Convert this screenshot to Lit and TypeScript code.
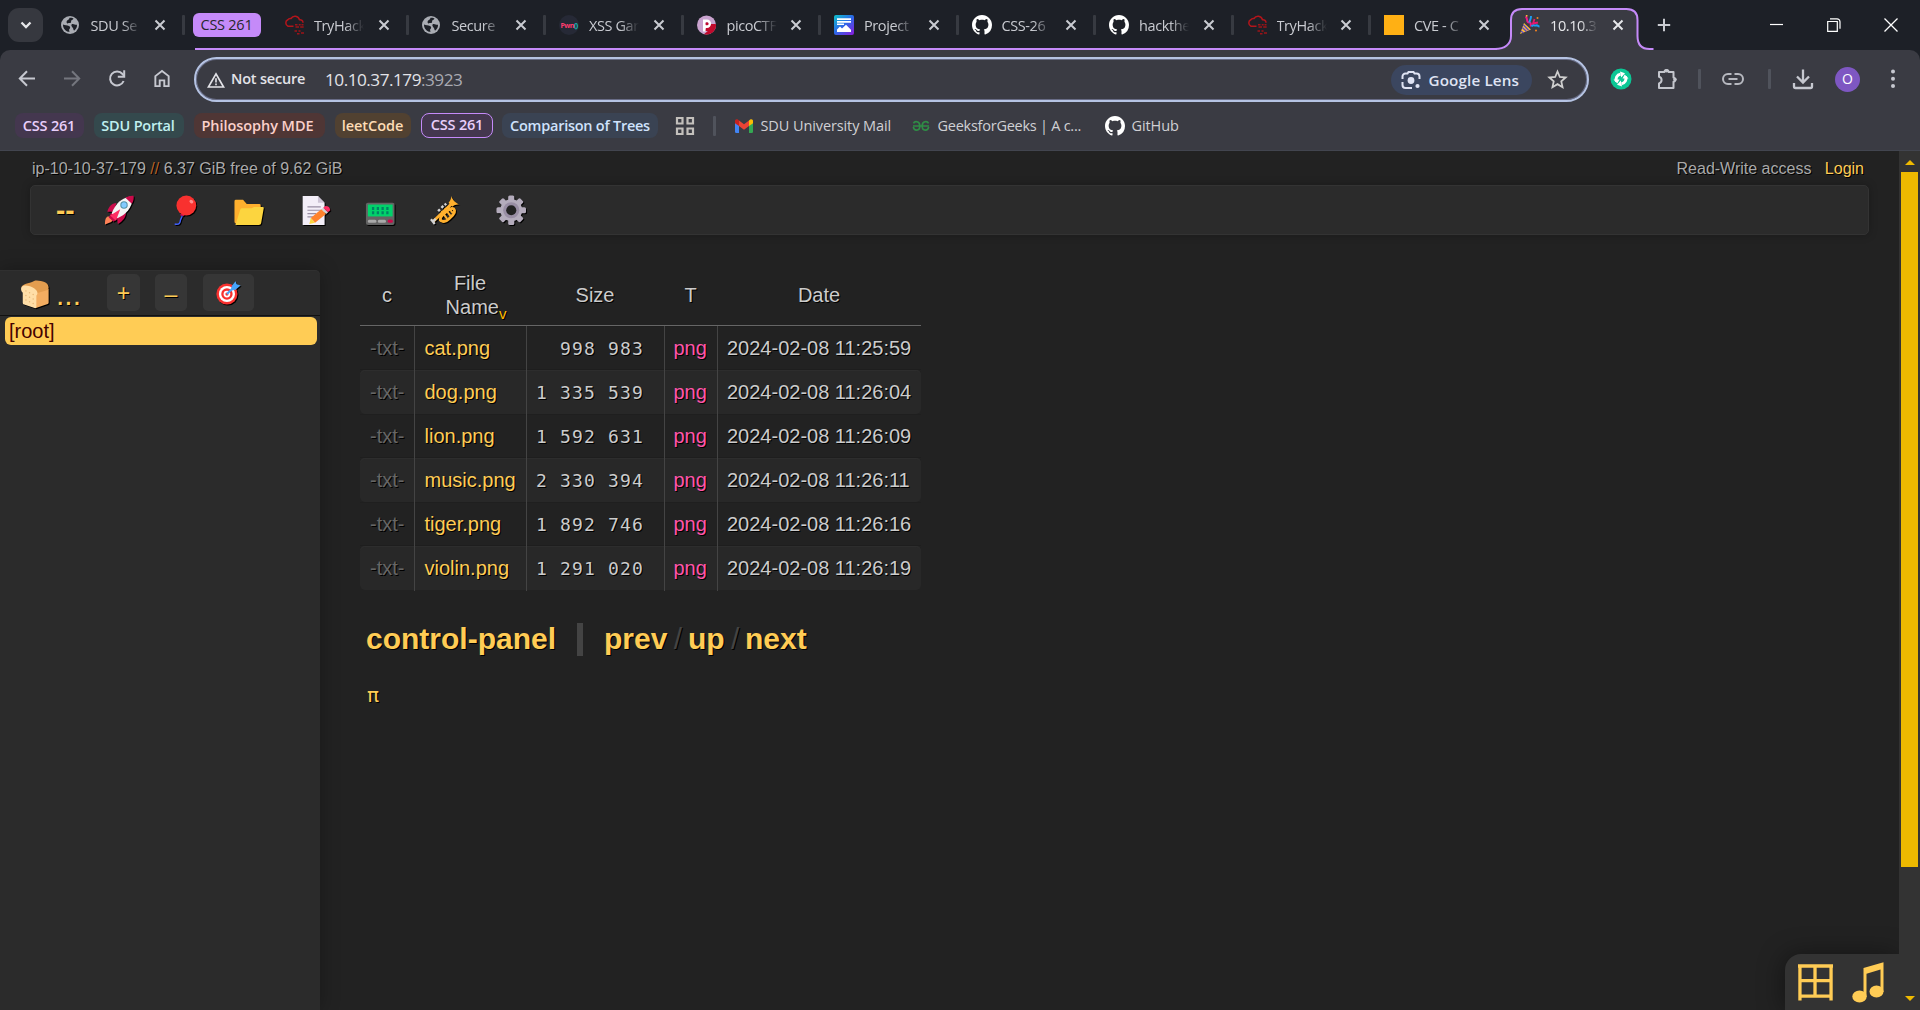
import { LitElement, html, css, svg, nothing } from "lit";
import { customElement, property } from "lit/decorators.js";
import { classMap } from "lit/directives/class-map.js";

/* ---------- icon library ---------- */

const GITHUB = svg`<path fill="#fff" d="M8 0C3.58 0 0 3.58 0 8c0 3.54 2.29 6.53 5.47 7.59.4.07.55-.17.55-.38 0-.19-.01-.82-.01-1.49-2.01.37-2.53-.49-2.69-.94-.09-.23-.48-.94-.82-1.13-.28-.15-.68-.52-.01-.53.63-.01 1.08.58 1.23.82.72 1.21 1.87.87 2.33.66.07-.52.28-.87.51-1.07-1.78-.2-3.64-.89-3.64-3.95 0-.87.31-1.59.82-2.15-.08-.2-.36-1.02.08-2.12 0 0 .67-.21 2.2.82.64-.18 1.32-.27 2-.27s1.36.09 2 .27c1.53-1.04 2.2-.82 2.2-.82.44 1.1.16 1.92.08 2.12.51.56.82 1.27.82 2.15 0 3.07-1.87 3.75-3.65 3.95.29.25.54.73.54 1.48 0 1.07-.01 1.93-.01 2.2 0 .21.15.46.55.38A8.01 8.01 0 0 0 16 8c0-4.42-3.58-8-8-8z"/>`;

const icon = (box: string, body: unknown, cls = "") =>
  html`<svg class="ic ${cls}" viewBox=${box} aria-hidden="true">${body}</svg>`;

const ICONS: Record<string, unknown> = {
  globe: icon("0 0 20 20", svg`<circle cx="9" cy="10" r="9" fill="#a9acb3"/><path fill="#1d2027" d="M2 9.500C4 10.500 6 9.800 8 11c1.800 1 1.200 2.300.4 3-.6.700-.2 2 .2 2.800C5 17 1.800 13.500 2 9.500zM8.500 2.800c2-.4 3 .1 4 .8-.4 1.400-1.500 1.200-2.200 2-.5 1 .2 1.600-.6 2.200-1 .5-2-.3-2.600.5C6.300 9 5 7.500 5.800 6c.7-1.100 2.500-1 2.700-3.200zM11 9c1.800-.5 2.800.9 5 .8.200 2.200-.9 4.400-2.600 5.700-1.400-.2-.7-1.700-1.500-2.600C11 12 9.600 10 11 9z"/>`),
  thm: icon("0 0 20 20", svg`<path d="M9.500 11.200H4a3.500 3.500 0 0 1-.2-6.400 3 3 0 0 1 3.200-1.300 4.700 4.700 0 0 1 8.500 1.200 3 3 0 0 1 3.500 3" fill="none" stroke="#b3151b" stroke-width="1.500"/><path d="M11 9.800h2.500m1.200 0h2m.8 0h2M11.500 12h3.500m1.200 0h3.500M10.500 16h2.500m1.500 0h2M13 18.800h2.500m1.500-.8h3" stroke="#9c1318" stroke-width="1.400"/>`),
  pwn: html`<span class="pwn"><i>Pwn</i><b>()</b></span>`,
  pico: icon("0 0 20 20", svg`<circle cx="9.500" cy="10" r="9.500" fill="#c9a3cf"/><path fill="#c10a2d" d="M7 19.200 19 9a9.500 9.500 0 0 1-12 10.200z"/><path fill="#c10a2d" d="M12 9l7 0-4 7-8 0z"/><path fill="none" stroke="#fff" stroke-width="2.600" d="M7.300 16.500V5.800h2.600a2.900 2.900 0 1 1 0 5.800H8"/><circle cx="10" cy="8.700" r="1.500" fill="#c10a2d"/>`),
  project: icon("0 0 20 20", svg`<defs><linearGradient id="pg" x1="0" y1="0" x2=".9" y2="1"><stop offset="0" stop-color="#0fc3c9"/><stop offset=".5" stop-color="#2a6be8"/><stop offset="1" stop-color="#8320dd"/></linearGradient></defs><rect width="20" height="20" rx="2" fill="url(#pg)"/><path fill="#fff" d="M3 3.200h14v1.800H3zM3 6h14v1.800H3zM3 8.600h7v1.500H3zM3 17v-2.500l3-3 2 2 4-3.800 5 5V17z"/>`),
  github: icon("0 0 16 16", GITHUB),
  cve: icon("0 0 20 20", svg`<rect width="20" height="20" fill="#ffb014"/>`),
  party: icon("0 0 20 20", svg`<path d="M4 8 0 19l11-4.500z" fill="#f9b939"/><path d="M2.300 12.500 6.500 16.500M3.300 9.800l5.300 5.500M1 16l2.500 2" stroke="#5a48c8" stroke-width="1.300"/><path d="M5.500 1.500c2 1 1 3 2 5s3 0 3.200 2-.2 2 .2 3" fill="none" stroke="#ec1a87" stroke-width="2"/><path d="M9.500 7.500C9.500 4.500 11 5.500 11 1M11.500 11.500c2-3 2.500-.3 4.500-1s1.500 1 3.500 1" fill="none" stroke="#1d9bf0" stroke-width="2"/><path d="M14.500 4 13 8.500l5-1" fill="none" stroke="#e8176f" stroke-width="1.800"/><circle cx="6.700" cy=".8" r=".9" fill="#f9b939"/><circle cx="16" cy="15.500" r="1" fill="#f58220"/><circle cx="17.500" cy="3" r="1" fill="#f58220"/>`),
  x: icon("0 0 12 12", svg`<path d="M1.500 1.500l9 9m0-9l-9 9" stroke="currentColor" stroke-width="2"/>`, "close"),
  down: icon("0 0 12 12", svg`<path d="M1.500 3.500 6 8l4.500-4.500" fill="none" stroke="#e6e7ea" stroke-width="2.300"/>`),
  plus: icon("0 0 14 14", svg`<path d="M7 .8v12.400M.8 7h12.400" stroke="#c9cbd1" stroke-width="2"/>`),
  back: icon("0 0 18 18", svg`<path d="M17 9H2.500M9 1.800 1.800 9 9 16.200" fill="none" stroke="#c6c8d0" stroke-width="2"/>`),
  forward: icon("0 0 18 18", svg`<path d="M1 9h14.500M9 1.800 16.200 9 9 16.200" fill="none" stroke="#74767e" stroke-width="2"/>`),
  reload: icon("0 0 18 18", svg`<path d="M15.600 11.500A7 7 0 1 1 14.500 4.500L16 6.500" fill="none" stroke="#c6c8d0" stroke-width="2"/><path d="M16.200.8v6.400H9.800" fill="none" stroke="#c6c8d0" stroke-width="2"/>`),
  home: icon("0 0 18 20", svg`<path d="M2 7.500 9 2l7 5.500V18h-4.600v-6H6.600v6H2z" fill="none" stroke="#c6c8d0" stroke-width="2"/>`),
  warn: icon("0 0 18 16", svg`<path d="M9 1.900 16.600 15H1.400z" fill="none" stroke="#e3e3e8" stroke-width="1.700"/><path d="M9 6.200v4.300M9 11.600v1.700" stroke="#e3e3e8" stroke-width="1.600"/>`),
  lens: icon("0 0 20 20", svg`<path d="M1.500 9V6.500a3 3 0 0 1 3-3h2L7.500 2h5l1 1.500h2a3 3 0 0 1 3 3V9M1.500 12v3a3 3 0 0 0 3 3H11" fill="none" stroke="#dfe3f3" stroke-width="2"/><circle cx="10" cy="10.500" r="3.400" fill="#dfe3f3"/><circle cx="16.500" cy="16" r="2.100" fill="#dfe3f3"/>`),
  star: icon("0 0 20 20", svg`<path d="M10 2.400l2.200 5.200 5.600.5-4.200 3.700 1.200 5.500-4.800-2.900-4.800 2.900 1.200-5.500L2.200 8.100l5.600-.5z" fill="none" stroke="#cfcfcf" stroke-width="1.700"/>`),
  gram: icon("0 0 22 22", svg`<circle cx="11" cy="11" r="10.500" fill="#0bc795"/><path d="M6.500 13.500A5.200 5.200 0 0 1 10.500 6.200M15.500 8.500a5.200 5.200 0 0 1-4 7.300" fill="none" stroke="#fff" stroke-width="3"/><path fill="#fff" d="M10 3.500l5 1.800-3.800 4.200zM12 18.500l-5-1.800 3.800-4.200zM3.500 11.500h6l-2.200 4zM12.500 10.500h6l-3.800-4z"/>`),
  puzzle: icon("0 0 22 22", svg`<path d="M3 4h5.500a2 2 0 0 1 4 0H17.500v5.500a2.200 2.200 0 0 1 0 4.300V20H3v-4.600a3.400 3.400 0 0 0 0-6.600z" fill="none" stroke="#c4c6cd" stroke-width="2" stroke-linejoin="round"/><circle cx="10.500" cy="2.800" r="1.800" fill="#c4c6cd"/><circle cx="19" cy="11.600" r="1.800" fill="#c4c6cd"/>`),
  link: icon("0 0 22 14", svg`<path d="M9.500 2H6a5 5 0 0 0 0 10h3.500M12.500 2H16a5 5 0 0 1 0 10h-3.500M6.500 7h9" fill="none" stroke="#b7b9c0" stroke-width="2"/>`),
  download: icon("0 0 22 22", svg`<path d="M11 1.500V14M5 8.500l6 6 6-6M2 15v3.500a1.500 1.500 0 0 0 1.500 1.500h15a1.500 1.500 0 0 0 1.500-1.500V15" fill="none" stroke="#c6c8d0" stroke-width="2.300"/>`),
  dots: icon("0 0 6 20", svg`<g fill="#c6c8d0"><circle cx="3" cy="2.500" r="2"/><circle cx="3" cy="9.700" r="2"/><circle cx="3" cy="17" r="2"/></g>`),
  grid: icon("0 0 20 20", svg`<path d="M2 2h5.500v5.500H2zM12.500 2H18v5.500h-5.500zM2 12.500h5.500V18H2zM12.500 12.500H18V18h-5.500z" fill="none" stroke="#c3c0bc" stroke-width="2.200"/>`),
  gmail: icon("0 0 18 14", svg`<path fill="#4285f4" d="M0 3h4v11H1.200A1.200 1.200 0 0 1 0 12.800z"/><path fill="#34a853" d="M14 3h4v9.800a1.200 1.200 0 0 1-1.200 1.200H14z"/><path fill="#fbbc04" d="M14 1.600 15.200.6C16.500-.4 18 .4 18 2v2.200L14 7z"/><path fill="#c5221f" d="M4 1.600 2.800.6C1.500-.4 0 .4 0 2v2.200L4 7z"/><path fill="#ea4335" d="M4 1.600l5 3.700 5-3.700V7l-5 3.700L4 7z"/>`),
  gfg: icon("0 0 18 12", svg`<path d="M1 6h16M1.500 3.300C2.500 1 7.800.5 7.800 6S2 11.300 1.400 7M16.500 3.300C15.500 1 10.200.5 10.200 6S16 11.300 16.600 7" fill="none" stroke="#2f8d46" stroke-width="1.700"/>`),
  min: icon("0 0 14 14", svg`<path d="M0 6.500h13" stroke="#fff" stroke-width="1.200"/>`),
  restore: icon("0 0 14 14", svg`<path d="M.7 3.500h9.600v9.800H.7z" fill="none" stroke="#fff" stroke-width="1.200"/><path d="M3 .8h7a3 3 0 0 1 3 3v7" fill="none" stroke="#fff" stroke-width="1.200"/>`),
  exit: icon("0 0 14 14", svg`<path d="M.5.500l13 13m0-13l-13 13" stroke="#fff" stroke-width="1.300"/>`),

  rocket: icon("0 0 32 32", svg`<path fill="#ff8257" d="M3 23c2-1 5 0 6 2s-1 3-2 3.500L1 31c0-3 0-6 2-8z"/><path fill="#ca0b4a" d="M13 8.500c-5 0-8 4-9.500 9l7 0zM23 18.500c0 5-3 8.500-8.500 12l-1-8z"/><path fill="#f4f4f4" d="M28 1.500C18 3 12 9 8 19.500l5 5.500C23 21 30 13 30 3z"/><path fill="#ca0b4a" d="M31 .8c-3-.3-6 .6-8.500 2l6.700 6.500C31 6.500 31.500 3.500 31 .8zM7.500 19l-2.500 4.500 5 4.500 4.500-3z"/><path fill="#ff2e63" d="M17 15 6.500 21.500l6 5.500z"/><circle cx="21" cy="10.500" r="3.900" fill="#5092a8"/><circle cx="21" cy="10.500" r="2.800" fill="#83cbff"/>`),
  balloon: icon("0 0 32 32", svg`<path d="M13.800 20c.6 4-1.500 4-1.800 6.500s-1 5-6 4" fill="none" stroke="#3f5fff" stroke-width="1.500"/><path fill="#ca0b4a" d="M12.500 19.500l4.500 0-1.500 2.800-4-1z"/><circle cx="18.200" cy="11" r="10.400" fill="#f8312f"/><ellipse cx="23.500" cy="7" rx="2.200" ry="1.700" fill="#ff8b8b" transform="rotate(35 23.500 7)"/>`),
  folder: icon("0 0 32 32", svg`<path fill="#ffb02e" d="M.5 6.500Q.5 5 2 5H9.500l4 4.500h13Q28 9.500 28 11v19H2.500Q.5 30 .5 28z"/><path fill="#fcd53f" d="M8.500 14H18.500l2.500-1.500H30Q31.500 12.500 31.200 14l-2.700 15.500Q28.200 31.500 26 31.500H1.500L6.500 15.500Q7 14 8.500 14z"/>`),
  memo: icon("0 0 32 32", svg`<g transform="translate(.8 0)"><path fill="#f3eef8" d="M2 1h16l7 7v23.500H2z"/><path fill="#cdc4d6" d="M18 1l7 7h-7z"/><path d="M7 12.500h14M7 16h14M7 19.500h9M7 23h6" stroke="#998ea4" stroke-width="1.200"/><path fill="#d3d3d3" d="M21.500 15.200l2-1.700 5.200 4.700-2 1.800z"/><path fill="#ff822d" d="M21.500 15l5 5L15 29l-4.500-5z"/><path fill="#fcd53f" d="M10.500 24l4.500 5-6 1.500z"/><path fill="#ff2e63" d="M23.500 13.500l2.500-2q4.500 0 5 4.500l-2.500 2.200z"/></g>`),
  pager: icon("0 0 32 32", svg`<rect x="1" y="8" width="30" height="23.500" rx="2" fill="#636363"/><rect x="3" y="10" width="26" height="12.500" fill="#00d26a"/><path d="M8.500 12.500v8M13.500 12.500v8M18.500 12.500v8M23.500 12.500v8" stroke="#008463" stroke-width="2.400" stroke-dasharray="3.200 1.400"/><path d="M4.500 27.500h6M15 27.500h5.500" stroke="#a9a9a9" stroke-width="3.200" stroke-linecap="round"/><path d="M25.500 27.500h2" stroke="#ca0b4a" stroke-width="3.400" stroke-linecap="round"/>`),
  trumpet: icon("0 0 32 32", svg`<path d="M3 28 24 8" stroke="#ffb02e" stroke-width="3"/><path fill="#ffb02e" d="M22 .8c1.500 4 5 8 9.500 9.500-3-.8-6 .2-8 2l-4-4.200C22 5.500 22.500 3 22 .8z"/><path d="M12 27c3 2 6 0 8-2l4-4c3-3 2-7-1-7-3 .5-12 8-12 10.500S10 26 12 27z" fill="none" stroke="#ffb02e" stroke-width="3"/><path d="M12 17l6 8M15.500 14l6 8M18.500 12l5.500 7" stroke="#ffb02e" stroke-width="2.200"/><path d="M8.500 17l2-2M12 13.500l2-2M15.500 10.500l1.500-1.500" stroke="#d3d3d3" stroke-width="2.600"/><path d="M1 25.500l4 5M3 28l3-3" stroke="#d3d3d3" stroke-width="2.400"/>`),
  gear: icon("0 0 32 32", svg`<g fill="#b4acbc"><circle cx="16" cy="16" r="11.500"/><rect x="12.800" y=".5" width="6.400" height="31" rx="1.600"/><rect x="12.800" y=".5" width="6.400" height="31" rx="1.600" transform="rotate(45 16 16)"/><rect x="12.800" y=".5" width="6.400" height="31" rx="1.600" transform="rotate(90 16 16)"/><rect x="12.800" y=".5" width="6.400" height="31" rx="1.600" transform="rotate(135 16 16)"/></g><circle cx="16" cy="16" r="8.500" fill="#998ea4"/><circle cx="16" cy="16" r="5.300" fill="#222"/>`),
  bread: icon("0 0 32 32", svg`<path fill="#f3ad61" d="M13 12 31 10v15q0 1-1 1.400L17 31z"/><path fill="#e39d4f" d="M1 8C2 4 9 4 15 1c3-1 8 0 12 1.500C31 4 32 9 30 11L17 15C14 11 5 8 1 8z"/><path fill="#ffdea7" d="M1 8c2-3 8-2 12 0 6 3 7 7 4.500 9V30q-.5 1.500-2 1L4 27q-1.500-.5-1.500-2V14C1 13 0 10 1 8z"/><g fill="#e8b878"><circle cx="6" cy="12" r=".8"/><circle cx="10" cy="14" r=".8"/><circle cx="14" cy="16" r=".8"/><circle cx="6" cy="17" r=".8"/><circle cx="10" cy="19" r=".8"/><circle cx="14" cy="21" r=".8"/><circle cx="6" cy="22" r=".8"/><circle cx="10" cy="24" r=".8"/><circle cx="14" cy="26" r=".8"/></g>`),
  target: icon("0 0 32 32", svg`<circle cx="14" cy="18" r="13.500" fill="#f8312f"/><circle cx="14" cy="18" r="10.300" fill="#fff"/><circle cx="14" cy="18" r="7.300" fill="#f8312f"/><circle cx="14" cy="18" r="4.300" fill="#fff"/><circle cx="14" cy="18" r="2" fill="#f8312f"/><path d="M14 18 25 7" stroke="#46a4fb" stroke-width="2.600"/><path fill="#46a4fb" d="M20 8l5-6.500 1.500 4L31.500 7 25 12.500l-5 1z"/>`),
  panes: icon("0 0 36 37", svg`<path d="M2 0v37M34 0v37M17.500 2v30M0 1.500h36M2 16.500h32M2 32.500h32" fill="none" stroke="#fc5" stroke-width="3.400"/>`),
  note: icon("0 0 32 41" , svg`<path d="M11.500 35V6L31.500 .2V30H28.500V7.500L14.500 11.800V35z" fill="#fc5"/><ellipse cx="7.500" cy="34.500" rx="7.200" ry="6" fill="#fc5"/><ellipse cx="24.500" cy="29.500" rx="7" ry="6" fill="#fc5"/>`),
};

/* ---------- tab strip ---------- */

interface Tab { icon: string; title: string; bare?: boolean }

const FIRST: Tab = { icon: "globe", title: "SDU Se" };
const GROUP: Tab[] = [
  { icon: "thm", title: "TryHack" },
  { icon: "globe", title: "Secure" },
  { icon: "pwn", title: "XSS Gar" },
  { icon: "pico", title: "picoCTF" },
  { icon: "project", title: "Project" },
  { icon: "github", title: "CSS-26" },
  { icon: "github", title: "hackthe" },
  { icon: "thm", title: "TryHack" },
  { icon: "cve", title: "CVE - C", bare: true },
];

@customElement("tab-strip")
class TabStrip extends LitElement {
  static styles = css`
    :host { display: flex; height: 50px; background: #1d2027; color: #c9cbd1; position: relative;
      font: 15px "Open Sans", "Noto Sans", sans-serif; }
    .ic { display: block; width: 100%; height: 100%; }
    .search { width: 35px; height: 34px; margin: 8px 3px 0 8px; border-radius: 11px; background: #36383f;
      display: grid; place-items: center; flex: none; }
    .search .ic { width: 12px; height: 12px; }
    .tab { box-sizing: border-box; flex: none; width: 137.500px; height: 50px; padding-left: 14.500px; display: flex; align-items: center; position: relative; }
    .fav { width: 20px; height: 20px; flex: none; position: relative; }
    .title { width: 50px; margin-left: 10px; white-space: pre; letter-spacing: -.4px; line-height: 24px; font-size: 14.500px; padding-top: 1px;
      -webkit-mask-image: linear-gradient(90deg, #000 62%, transparent); mask-image: linear-gradient(90deg, #000 62%, transparent); }
    .close { width: 12px; height: 12px; margin-left: 13.500px; flex: none; position: relative; }
    .sep { width: 3px; height: 20px; border-radius: 1px; background: #373a41; margin-left: auto; margin-right: -1.500px; }
    .group { width: 86px; flex: none; display: flex; align-items: center; padding-left: 9px; box-sizing: border-box; }
    .chip { width: 68px; height: 24px; border-radius: 6px; background: #c58af9; color: #25272d; text-align: center; line-height: 24px; letter-spacing: -.25px; font-size: 14.500px; }
    .line { position: absolute; left: 195px; width: 1302px; bottom: 0; height: 2px; background: #c58af9; }
    .active { padding-left: 12.500px; color: #e6e7ea; width: 146px; }
    .active .title { width: 48px; margin-left: 10.500px; }
    .active .close { margin-left: 14px; }
    .shape { position: absolute; left: -12.500px; top: 0; width: 160px; height: 50px; }
    .add { width: 14px; margin-left: 4px; }
    .add .ic, .win .ic { width: 14px; height: 14px; }
    .add, .win { display: flex; align-items: center; }
    .win { margin-left: auto; gap: 43px; padding-right: 22px; }
    .pwn { display: flex; align-items: center; justify-content: center; width: 20px; height: 20px; border-radius: 50%; background: #262936; font-size: 7px; }
    .pwn i { color: #ff3c6e; font-style: normal; font-weight: 700; letter-spacing: -.5px; } .pwn b { color: #19c3c6; letter-spacing: -.5px; }
  `;
  private tab(t: Tab, active = false) {
    return html`<div class=${classMap({ tab: true, active })}>
      ${active ? html`<svg class="shape" viewBox="0 0 160 50"><path fill="#3a3b43" d="M0 50c10 0 16-5 16-14V20c0-7 4-11 11-11h105c7 0 11 4 11 11v16c0 8 5 14 14 14z"/><path fill="none" stroke="#c58af9" stroke-width="2" d="M0 49c10 0 16-5 16-13V20c0-7 4-11 11-11h104.500c7 0 11 4 11 11v16c0 8 4 13 12 13h4"/></svg>` : nothing}
      <div class="fav">${ICONS[t.icon]}</div><div class="title">${t.title}</div>${ICONS.x}
      ${active || t.bare ? nothing : html`<div class="sep"></div>`}</div>`;
  }
  render() {
    return html`<div class="search">${ICONS.down}</div>${this.tab(FIRST)}
      <div class="group"><div class="chip">CSS 261</div></div>
      <div class="line"></div>
      ${GROUP.map((t) => this.tab(t))}
      ${this.tab({ icon: "party", title: "10.10.3" }, true)}
      <div class="add">${ICONS.plus}</div>
      <div class="win">${ICONS.min}${ICONS.restore}${ICONS.exit}</div>`;
  }
}

/* ---------- address bar and bookmarks ---------- */

const CHIPS = [
  ["CSS 261", "violet"], ["SDU Portal", "teal"], ["Philosophy MDE", "red"],
  ["leetCode", "amber"], ["CSS 261", "violet open"], ["Comparison of Trees", "blue"],
];

@customElement("browser-bar")
class BrowserBar extends LitElement {
  static styles = css`
    :host { display: block; height: 101px; background: #3a3b43; border-radius: 10px 10px 0 0; box-sizing: border-box;
      font: 14.500px "Open Sans", "Noto Sans", sans-serif; color: #d0d0d4; border-bottom: 1px solid #42454f; }
    .ic { display: block; flex: none; }
    .row { display: flex; align-items: center; height: 59px; }
    .nav { display: flex; align-items: center; gap: 27px; padding: 0 0 2px 18px; width: 176px; box-sizing: border-box; flex: none; }
    .nav .ic { width: 18px; height: 19px; }
    .omni { box-sizing: border-box; width: 1395px; height: 45px; border: 2px solid #b5c3e3; border-radius: 23px; box-shadow: inset 0 0 0 1px #686c86;
      display: flex; align-items: center; padding: 0 19.500px 0 11px; margin-left: 18px; flex: none; }
    .warnbox svg { width: 18px; height: 16px; }
    .ns { margin-left: 6px; width: 93px; font-weight: 600; font-size: 14.500px; color: #e3e3e8; letter-spacing: -.2px; padding-bottom: 2px; }
    .url { font-size: 17.200px; color: #e3e3e8; letter-spacing: -.5px; padding-bottom: 1px; margin-left: 1px; }
    .url span { color: #a9aab2; }
    .lens { margin-left: auto; width: 141px; height: 30px; border-radius: 15px; background: #3b465f; display: flex; align-items: center; font-weight: 600; color: #dfe3f3;
      box-sizing: border-box; padding-left: 10px; gap: 8px; white-space: nowrap; font-size: 15.200px; letter-spacing: .15px; }
    .lens .ic { width: 20px; height: 20px; }
    .star { margin-left: 15px; } .star .ic { width: 21px; height: 21px; }
    .tools { display: flex; align-items: center; flex: 1; padding: 0 0 1px 20.500px; }
    .gram { width: 22px; height: 22px; } .puz { width: 22px; height: 22px; margin-left: 24px; }
    .bar { width: 3px; height: 20px; background: #50535c; border-radius: 1px; }
    .b1 { margin-left: 20px; } .link { width: 22px; margin-left: 21px; } .b2 { margin-left: 24px; }
    .dl { width: 22px; margin-left: 21px; } .dots { width: 6px; margin-left: 29.500px; }
    .me { width: 25px; height: 25px; border-radius: 50%; background: #7e57c2; color: #fff; text-align: center; line-height: 24px; margin-left: 21.500px; font-size: 14px; }
    .marks { display: flex; align-items: center; height: 33px; padding-left: 15px; gap: 10px; }
    .chip { height: 25px; line-height: 25px; border-radius: 8px; text-align: center; font-weight: 600; font-size: 14.500px; letter-spacing: -.2px; white-space: nowrap; box-sizing: border-box; padding-right: 1px; }
    .c0 { width: 69px; } .c1 { width: 90px; padding-right: 2px; } .c2 { width: 131px; padding-right: 4px; letter-spacing: -.05px; } .c3 { width: 76px; padding-right: 1px; letter-spacing: -.05px; } .c4 { width: 72px; } .c5 { width: 156px; margin-left: -1px; letter-spacing: -.25px; padding: 0; }
    .violet { background: #44374f; color: #e9cffb; } .open { border: 1.500px solid #c58af9; line-height: 22px; padding-right: 0; }
    .teal { background: #34494d; color: #c0f0f0; } .red { background: #4f3635; color: #fbd0cb; }
    .amber { background: #514131; color: #fddcb5; } .blue { background: #3a4353; color: #cfe2fc; }
    .grid { width: 20px; margin-left: 6.500px; } .b3 { margin-left: 8px; }
    .mk { display: flex; align-items: center; gap: 8px; white-space: nowrap; letter-spacing: -.1px; }
    .m1 { margin-left: 9px; width: 168px; } .m1 .ic { width: 18px; height: 14px; }
    .m2 { width: 182px; margin-left: -1px; letter-spacing: -.25px; } .m2 .ic { width: 18px; height: 12px; } .m3 .ic { width: 20px; height: 20px; } .m3 { gap: 7px; margin-left: 1px; }
  `;
  render() {
    return html`<div class="row">
      <div class="nav">${ICONS.back}${ICONS.forward}${ICONS.reload}${ICONS.home}</div>
      <div class="omni"><span class="warnbox">${ICONS.warn}</span><span class="ns">Not secure</span>
        <span class="url">10.10.37.179<span>:3923</span></span>
        <div class="lens">${ICONS.lens}<span>Google Lens</span></div><div class="star">${ICONS.star}</div></div>
      <div class="tools"><div class="gram">${ICONS.gram}</div><div class="puz">${ICONS.puzzle}</div><div class="bar b1"></div>
        <div class="link">${ICONS.link}</div><div class="bar b2"></div><div class="dl">${ICONS.download}</div>
        <div class="me">O</div><div class="dots">${ICONS.dots}</div></div></div>
      <div class="marks">${CHIPS.map(([t, c], i) => html`<div class="chip c${i} ${c}">${t}</div>`)}
        <div class="grid">${ICONS.grid}</div><div class="bar b3"></div>
        <div class="mk m1">${ICONS.gmail}<span>SDU University Mail</span></div>
        <div class="mk m2">${ICONS.gfg}<span>GeeksforGeeks | A c...</span></div>
        <div class="mk m3">${ICONS.github}<span>GitHub</span></div></div>`;
  }
}

/* ---------- file table ---------- */

const FILES = [
  ["cat.png", "998 983", "2024-02-08 11:25:59"],
  ["dog.png", "1 335 539", "2024-02-08 11:26:04"],
  ["lion.png", "1 592 631", "2024-02-08 11:26:09"],
  ["music.png", "2 330 394", "2024-02-08 11:26:11"],
  ["tiger.png", "1 892 746", "2024-02-08 11:26:16"],
  ["violin.png", "1 291 020", "2024-02-08 11:26:19"],
];

@customElement("file-table")
class FileTable extends LitElement {
  @property({ attribute: false }) files = FILES;
  static styles = css`
    :host { display: block; width: 561px; }
    .r { display: grid; grid-template-columns: 54px 112px 138px 53px 204px; height: 44px; line-height: 44px; }
    .r > div { padding-left: 9.500px; white-space: pre; border-left: 1px solid #444; box-sizing: border-box; }
    .r > div:first-child { border: 0; padding-left: 10px; color: #666; }
    .body .r:nth-child(even) { background: #282828; border-radius: 5px; box-shadow: inset 0 1px 0 #2d2d2d; }
    .body .r:nth-child(odd) { box-shadow: inset 0 -1px 0 #1e1e1e, inset 0 1px 0 #1f1f1f; }
    .head { height: 65px; box-sizing: border-box; padding-top: 4px; border-bottom: 1px solid #666; align-items: center; text-align: center; line-height: 24px; }
    .head > div, .head > div:first-child { border: 0; padding: 0; color: #ccc; }
    .head b { font-weight: 400; font-size: 15px; color: #fb0; vertical-align: -5px; line-height: 0; margin-right: -12px; }
    .name { color: #fc5; }
    .r .size { font: 18px "DejaVu Sans Mono", monospace; letter-spacing: 1.160px; line-height: 45px; text-align: right; padding: 0 20px 0 0; }
    .r .type { color: #f5a; padding-left: 8.500px; }
    .r .date { padding-left: 9px; }
  `;
  render() {
    return html`<div class="r head"><div>c</div><div class="nm">File<br>Name<b>v</b></div><div>Size</div><div>T</div><div>Date</div></div>
      <div class="body">${this.files.map(([n, s, d]) => html`<div class="r"><div>-txt-</div><div class="name">${n}</div><div class="size">${s}</div><div class="type">png</div><div class="date">${d}</div></div>`)}</div>`;
  }
}

/* ---------- page ---------- */

@customElement("app-root")
class AppRoot extends LitElement {
  static styles = css`
    :host { display: flex; flex-direction: column; width: 1920px; height: 1010px; overflow: hidden; background: #1d2027; }
    .ic { display: block; width: 100%; height: 100%; overflow: visible; }
    .page { flex: 1; display: flex; background: #222; color: #ccc; font: 20px "Liberation Sans", Arial, sans-serif; text-shadow: 1px 1px 0 #000; position: relative; min-height: 0; }
    .main { flex: 1; display: flex; flex-direction: column; min-width: 0; }
    .info { height: 34px; display: flex; justify-content: space-between; padding: 1px 35px 0 32px; font-size: 16px; line-height: 34px; color: #aaa; box-sizing: border-box; }
    .info i { font-style: normal; color: #b5622a; } .info b { font-weight: 400; color: #fc5; margin-left: 9px; }
    .ops { box-sizing: border-box; height: 50px; margin: 0 30px; border: 1px solid #333; border-radius: 5px; background: #2b2b2b; display: flex; align-items: center; padding: 0 0 0 25px;
      box-shadow: 0 0 8px rgba(0,0,0,.25); gap: 34.800px; }
    .ops .dash { color: #fc5; width: 19px; margin: 2px -6px 0 0; font-size: 28px; font-weight: 700; white-space: nowrap; }
    .ops .e { width: 30.500px; height: 30.500px; filter: drop-shadow(1px 1px 0 #000); margin-top: 1px; }
    .cols { display: flex; flex: 1; min-height: 0; padding-top: 35px; }
    .tree { width: 320px; background: #2b2b2b; border-radius: 0 5px 0 0; box-shadow: 0 0 20px rgba(0,0,0,.3), inset 0 1px 0 #303030; }
    .th { height: 46px; border-bottom: 1px solid #111; display: flex; box-sizing: border-box; padding: 4px 0 0 20px; color: #fc5; }
    .bread { width: 30px; height: 29px; margin-top: 6px; filter: drop-shadow(1px 1px 0 #000); }
    .el { width: 49px; padding-left: 6px; font-size: 30px; line-height: 41px; box-sizing: border-box; height: 37px; margin-right: 1px; }
    .btn { height: 37px; background: #363636; border-radius: 5px; text-align: center; line-height: 38px; font-size: 23px; }
    .p { width: 33px; margin-left: 7px; } .m { width: 32px; margin-left: 15px; line-height: 40px; } .t { width: 51px; margin-left: 16px; display: grid; place-items: center; }
    .t .ic { width: 25px; height: 25px; filter: drop-shadow(1px 1px 0 #000); }
    .root { margin: 1px 3px 0 5px; height: 28px; line-height: 28px; border-radius: 6px; background: #fc5; color: #400; padding-left: 4px; text-shadow: none; }
    .files { padding: 5px 0 0 40px; margin-top: -14px; }
    .foot { display: flex; font-size: 30px; font-weight: 700; color: #fc5; margin: 31px 0 0 6px; line-height: 36px; align-items: center; }
    .vb { width: 6px; height: 33px; background: #444; margin: 0 21px 0 21px; }
    .foot i { color: #444; font-weight: 400; font-style: normal; width: 21px; text-align: center; }
    .foot i + span { margin-left: -.5px; }
    .pi { color: #fc5; font: 20px/36px "DejaVu Sans", sans-serif; margin: 20px 0 0 7px; }
    .scroll { width: 21px; background: #333; display: flex; flex-direction: column; align-items: center; box-sizing: border-box; padding: 9px 0 9px; }
    .up, .dn { border: 5px solid transparent; border-top: 0; border-bottom-color: #f0ba00; width: 0; }
    .dn { border-top: 5px solid #f0ba00; border-bottom: 0; margin-top: auto; }
    .thumb { width: 17px; height: 695px; margin-top: 7px; background: #edb900; }
    .widget { position: absolute; right: 21px; bottom: 0; width: 114px; height: 56px; background: #333; border-radius: 16px 0 0 0; box-shadow: -2px 0 26px rgba(0,0,0,.4); clip-path: inset(-40px 0 0 -40px);
      display: flex; box-sizing: border-box; padding: 8px 0 0 13px; }
    .panes { width: 35px; height: 37px; margin-top: 2px; } .note { width: 32px; height: 41px; margin-left: 19px; }
  `;
  render() {
    const ops = ["rocket", "balloon", "folder", "memo", "pager", "trumpet", "gear"];
    return html`<tab-strip></tab-strip><browser-bar></browser-bar>
      <div class="page"><div class="main">
        <div class="info"><span>ip-10-10-37-179 <i>//</i> 6.37 GiB free of 9.62 GiB</span><span>Read-Write access <b>Login</b></span></div>
        <div class="ops"><span class="dash">--</span>${ops.map((o) => html`<div class="e">${ICONS[o]}</div>`)}</div>
        <div class="cols">
          <div class="tree"><div class="th"><div class="bread">${ICONS.bread}</div><div class="el">...</div><div class="btn p">+</div><div class="btn m">–</div><div class="btn t">${ICONS.target}</div></div>
            <div class="root">[root]</div></div>
          <div class="files"><file-table></file-table>
            <div class="foot"><span>control-panel</span><div class="vb"></div><span>prev</span><i>/</i><span>up</span><i>/</i><span>next</span></div>
            <div class="pi">π</div></div>
        </div></div>
        <div class="scroll"><div class="up"></div><div class="thumb"></div><div class="dn"></div></div>
        <div class="widget"><div class="panes">${ICONS.panes}</div><div class="note">${ICONS.note}</div></div>
      </div>`;
  }
}
